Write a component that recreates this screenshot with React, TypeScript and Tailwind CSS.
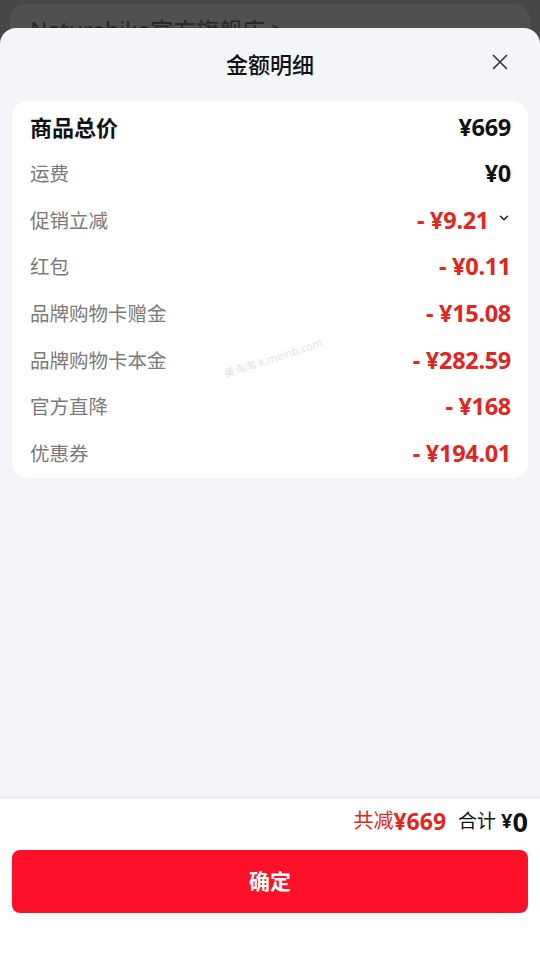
import React from 'react';
import { ChevronDown } from 'lucide-react';

type Row = {
  label: string;
  value: string;
  red?: boolean;
  strong?: boolean;
  expand?: boolean;
};

const rows: Row[] = [
  { label: '商品总价', value: '¥669', strong: true },
  { label: '运费', value: '¥0' },
  { label: '促销立减', value: '- ¥9.21', red: true, expand: true },
  { label: '红包', value: '- ¥0.11', red: true },
  { label: '品牌购物卡赠金', value: '- ¥15.08', red: true },
  { label: '品牌购物卡本金', value: '- ¥282.59', red: true },
  { label: '官方直降', value: '- ¥168', red: true },
  { label: '优惠券', value: '- ¥194.01', red: true },
];

const font = "font-['Noto_Sans','Noto_Sans_CJK_SC',sans-serif]";

const App: React.FC = () => {
  return (
    <div className={`h-[967px] w-[540px] flex flex-col bg-[#474747] overflow-hidden ${font}`}>
      {/* page behind the sheet */}
      <div className="h-[28px] shrink-0 overflow-hidden pt-[4px] px-[10px]">
        <div className="h-[40px] rounded-t-[16px] bg-[#505050] pl-[20px] pt-[11px] text-[23px] leading-[30px] text-[#262626]">
          Naturehike官方旗舰店 &gt;
        </div>
      </div>

      {/* sheet */}
      <div className="flex-1 flex flex-col bg-[#f4f5f9] rounded-t-[16px] relative">
        <div className="h-[73px] shrink-0 flex items-center justify-center relative">
          <span className="text-[22px] font-medium text-[#111]">金额明细</span>
          <button className="absolute right-[32px] top-[26px] w-[16px] h-[16px]">
            <svg viewBox="0 0 16 16" width="16" height="16" fill="none" stroke="#333" strokeWidth="1.6">
              <path d="M1 1 L15 15 M15 1 L1 15" />
            </svg>
          </button>
        </div>

        <div className="mx-[12px] rounded-[16px] bg-white pt-[3px] pb-[1px] pl-[18px] pr-[17px]">
          {rows.map((r) => (
            <div key={r.label} className="h-[46.6px] flex items-center justify-between">
              <span
                className={
                  r.strong
                    ? 'text-[22px] font-bold text-[#111]'
                    : 'text-[19.5px] text-[#7a7a7a]'
                }
              >
                {r.label}
              </span>
              <span className="flex items-center">
                <span
                  className={`text-[23.5px] font-bold tracking-[-0.3px] ${
                    r.red ? 'text-[#e1261e]' : 'text-[#111]'
                  }`}
                >
                  {r.value}
                </span>
                {r.expand && (
                  <ChevronDown size={14} strokeWidth={2.2} className="ml-[8px] -mt-[4px] text-[#111]" />
                )}
              </span>
            </div>
          ))}
        </div>

        <div className="absolute left-[222px] top-[322px] -rotate-[18deg] text-[11px] text-[#e4e4e4] pointer-events-none">
          美淘淘 k.meinb.com
        </div>

        <div className="flex-1" />

        {/* footer */}
        <div className="shrink-0 bg-white border-t border-[#e6e6e8] px-[12px] pb-[54px]">
          <div className="h-[46px] flex items-center justify-end">
            <span className="text-[20px] text-[#e1261e]">共减</span>
            <span className="text-[23px] font-bold text-[#e1261e]">¥669</span>
            <span className="ml-[12px] text-[19px] text-[#111]">合计</span>
            <span className="ml-[5px] text-[20px] font-bold text-[#111]">¥</span>
            <span className="text-[27px] font-bold text-[#111] leading-none">0</span>
          </div>
          <button className="mt-[6px] w-full h-[63px] rounded-[8px] bg-[#fe1029] text-white text-[21px] font-bold">
            确定
          </button>
        </div>
      </div>
    </div>
  );
};

export default App;
